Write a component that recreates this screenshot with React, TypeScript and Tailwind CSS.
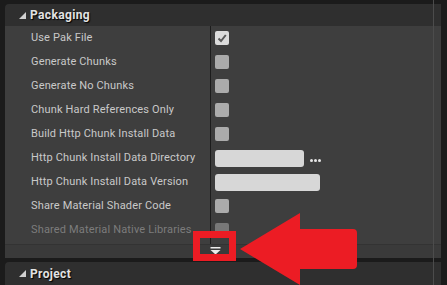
import React from "react";

type Row = {
  label: string;
  kind: "check" | "uncheck" | "input" | "input2" | "disabled";
};

const rows: Row[] = [
  { label: "Use Pak File", kind: "check" },
  { label: "Generate Chunks", kind: "uncheck" },
  { label: "Generate No Chunks", kind: "uncheck" },
  { label: "Chunk Hard References Only", kind: "uncheck" },
  { label: "Build Http Chunk Install Data", kind: "uncheck" },
  { label: "Http Chunk Install Data Directory", kind: "input" },
  { label: "Http Chunk Install Data Version", kind: "input2" },
  { label: "Share Material Shader Code", kind: "uncheck" },
  { label: "Shared Material Native Libraries", kind: "disabled" },
];

function Tri() {
  return (
    <svg width="7" height="7" viewBox="0 0 7 7" className="shrink-0">
      <polygon points="7,0 7,7 0,7" fill="#d0d0d0" />
    </svg>
  );
}

function Value({ kind }: { kind: Row["kind"] }) {
  if (kind === "check")
    return (
      <div className="w-[14px] h-[14px] rounded-[2px] bg-[#dcdcdc] flex items-center justify-center">
        <svg width="10" height="10" viewBox="0 0 10 10">
          <path d="M1.5 5.5 L4 8 L8.8 2" stroke="#5a5a5a" strokeWidth="2" fill="none" />
        </svg>
      </div>
    );
  if (kind === "uncheck")
    return <div className="w-[14px] h-[14px] rounded-[2px] bg-[#ababab]" />;
  if (kind === "disabled")
    return <div className="w-[14px] h-[14px] rounded-[2px] bg-[#787878]" />;
  if (kind === "input")
    return (
      <div className="flex items-center gap-[6px]">
        <div className="w-[89px] h-[17px] rounded-[3px] bg-[#d7d7d7]" />
        <div className="flex gap-[1px] pt-[5px]">
          <div className="w-[3px] h-[3px] rounded-full bg-[#e6e6e6]" />
          <div className="w-[3px] h-[3px] rounded-full bg-[#e6e6e6]" />
          <div className="w-[3px] h-[3px] rounded-full bg-[#e6e6e6]" />
        </div>
      </div>
    );
  return <div className="w-[105px] h-[17px] rounded-[3px] bg-[#d7d7d7]" />;
}

export default function App() {
  const font = { fontFamily: "Roboto, 'Liberation Sans', sans-serif" };
  return (
    <div
      className="relative w-[447px] h-[285px] bg-[#1b1b1b] overflow-hidden pt-[4px] pl-[5px] pr-[6px]"
      style={font}
    >
      <div className="flex flex-col">
        {/* Packaging header */}
        <div className="h-[22px] bg-[#2f2f2f] rounded-tl-[4px] flex items-center pl-[14px] gap-[4px]">
          <Tri />
          <span className="text-[12px] font-bold tracking-[0.35px] text-[#e2e2e2] [text-shadow:1px_1px_1px_#000]">
            Packaging
          </span>
        </div>
        {/* rows */}
        <div className="flex flex-col bg-[#3e3e3e]">
          {rows.map((r) => (
            <div key={r.label} className="h-[24px] flex">
              <div
                className={`w-[205px] flex items-center pl-[26px] text-[11px] tracking-[0.15px] ${
                  r.kind === "disabled" ? "text-[#7c7c7c]" : "text-[#c9c9c9]"
                }`}
              >
                {r.label}
              </div>
              <div className="w-[1px] bg-[#1c1c1c]" />
              <div className="flex-1 flex items-center pl-[4px]">
                <Value kind={r.kind} />
              </div>
            </div>
          ))}
          <div className="h-[2px] flex">
            <div className="w-[205px]" />
            <div className="w-[1px] bg-[#1c1c1c]" />
          </div>
        </div>
        {/* expander bar */}
        <div className="h-[14px] bg-[#3a3a3a] border-t border-[#333333] flex items-start pt-[2px] pl-[205px]">
          <svg width="11" height="8" viewBox="0 0 11 8">
            <rect x="0.5" y="0" width="10" height="1.5" fill="#ececec" />
            <polygon points="0.5,3 10.5,3 5.5,7.5" fill="#ececec" />
          </svg>
        </div>
        <div className="h-[4px] bg-[#1b1b1b]" />
        {/* Project header */}
        <div className="h-[23px] bg-[#2f2f2f] rounded-tl-[4px] flex items-center pl-[14px] gap-[4px]">
          <Tri />
          <span className="text-[12px] font-bold tracking-[0.35px] text-[#e2e2e2] [text-shadow:1px_1px_1px_#000]">
            Project
          </span>
        </div>
      </div>

      {/* scrollbar line */}
      <div className="absolute left-[433px] top-0 w-[1px] h-full bg-[#4c4c4c]" />

      {/* red annotation box */}
      <div className="absolute left-[193px] top-[231px] w-[43px] h-[30px] border-[7px] border-[#ec1c24]" />

      {/* red arrow */}
      <svg
        className="absolute left-0 top-0"
        width="447"
        height="285"
        viewBox="0 0 447 285"
      >
        <path
          d="M240 249 L300 213 L300 229 L353 229 Q357 229 357 233 L357 265 Q357 269 353 269 L300 269 L300 285 Z"
          fill="#ec1c24"
        />
      </svg>
    </div>
  );
}
